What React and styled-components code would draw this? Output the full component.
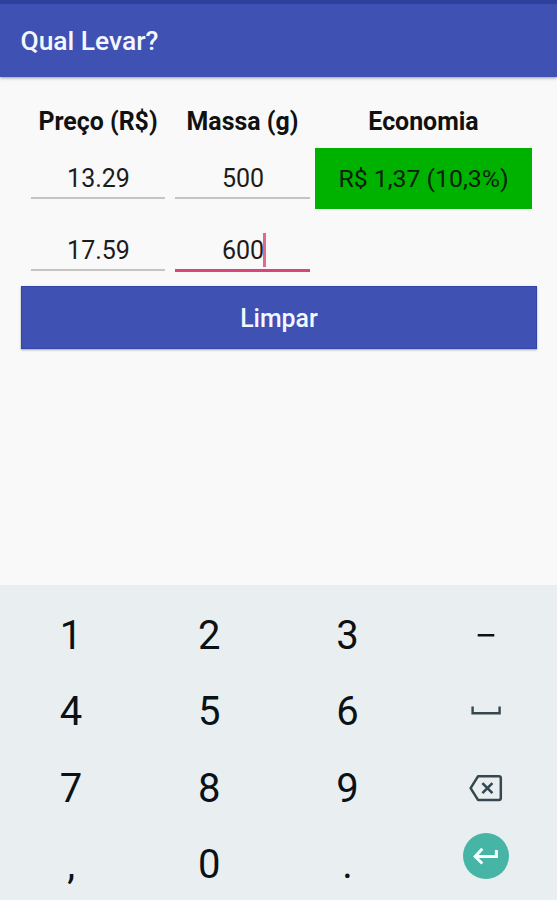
import React from 'react';
import styled, { createGlobalStyle } from 'styled-components';

const indigo = '#3f51b3';
const indigoDark = '#2f3f9c';
const pink = '#d8457a';
const green = '#00b200';
const teal = '#46b5a6';
const inkColor = '#1c1c1c';
const iconColor = '#37474f';
const robotoFont = 'Roboto, sans-serif';

const GlobalStyle = createGlobalStyle`
  body {
    margin: 0;
    background: #f9f9f9;
    font-family: ${robotoFont};
  }

  * {
    box-sizing: border-box;
  }
`;

const Screen = styled.div`
  display: flex;
  flex-direction: column;
  width: 557px;
  height: 900px;
  overflow: hidden;
`;

const Toolbar = styled.header`
  display: flex;
  align-items: center;
  flex: none;
  height: 77px;
  padding: 0 20.5px;
  border-top: 4px solid ${indigoDark};
  background: ${indigo};
  box-shadow: 0 1px 3px rgba(0, 0, 0, 0.4);
`;

const Title = styled.h1`
  margin: 0;
  color: #f4f7ff;
  font-size: 26.4px;
  font-weight: 500;
  line-height: 30px;
`;

const Content = styled.main`
  flex: 1;
  padding: 18px 20px 0 21px;
`;

const Table = styled.div`
  display: grid;
  grid-template-columns: 144px 145px 217px;
  grid-template-rows: 53px 72px 66px;
  padding-left: 5px;
`;

const Heading = styled.div`
  padding-top: 12px;
  color: #111;
  font-size: 24.9px;
  font-weight: 700;
  line-height: 30px;
  text-align: center;
`;

const Field = styled.div`
  display: flex;
  justify-content: center;
  height: ${({ $active }) => ($active ? 52 : 51)}px;
  margin: 0 5px;
  padding-top: 15px;
  border-bottom: ${({ $active }) => ($active ? `3px solid ${pink}` : '2px solid #c4c4c4')};
  color: ${inkColor};
  font-size: 25px;
  line-height: 32px;
`;

const Value = styled.span`
  position: relative;
  left: 0.5px;
`;

const Caret = styled.i`
  position: absolute;
  top: -2px;
  right: -2px;
  width: 3px;
  height: 34px;
  background: ${pink};
  opacity: 0.8;
`;

const Saving = styled.div`
  height: 61px;
  background: ${green};
  color: #0a1f0a;
  font-size: 24.8px;
  line-height: 62px;
  text-align: center;
`;

const ClearButton = styled.button`
  display: block;
  width: 100%;
  height: 63px;
  padding: 2px 0 0;
  border: 1px solid #3345a6;
  background: ${indigo};
  box-shadow: 0 1px 2px rgba(0, 0, 0, 0.35);
  color: #f4f7ff;
  font: 500 24.9px/30px ${robotoFont};
`;

const Keyboard = styled.footer`
  display: grid;
  grid-template-columns: repeat(4, 138.2px);
  grid-template-rows: repeat(4, 76.5px);
  flex: none;
  height: 315px;
  padding: 12px 0 0 2px;
  background: #e9eff0;
`;

const Key = styled.div`
  display: flex;
  align-items: center;
  justify-content: center;
  padding-top: 1px;
  color: #0b1114;
  font-size: 40px;
  line-height: 46px;
`;

const EnterKey = styled.div`
  display: flex;
  align-items: center;
  justify-content: center;
  width: 46px;
  height: 46px;
  margin-bottom: 18px;
  border-radius: 50%;
  background: ${teal};
`;

const MinusIcon = () => (
  <svg width="18" height="4" viewBox="0 0 18 4">
    <path d="M.7 1.1h16.6" stroke="#0b1114" strokeWidth="2.8" />
  </svg>
);

const SpaceIcon = () => (
  <svg width="30" height="12" viewBox="0 0 30 12">
    <path d="M1.6 .4v6.8h27V.4" fill="none" stroke={iconColor} strokeWidth="2.4" />
  </svg>
);

const BackspaceIcon = () => (
  <svg width="34" height="28" viewBox="0 0 34 28" fill="none" stroke={iconColor}>
    <path
      d="M9 1.3h20.8a2 2 0 0 1 2 2v19.6a2 2 0 0 1-2 2H9L1.6 13.1z"
      strokeWidth="2.5"
      strokeLinejoin="round"
    />
    <path d="M13.4 8.1l10 10M23.4 8.1l-10 10" strokeWidth="2.6" />
  </svg>
);

const EnterIcon = () => (
  <svg width="26" height="18" viewBox="0 0 26 18">
    <path
      d="M23.4 3v6.5H2.2M9.3 1.8L2.2 9.5l7.1 7"
      fill="none"
      stroke="#f5fffd"
      strokeWidth="3"
    />
  </svg>
);

const keys = [
  '1', '2', '3', <MinusIcon />,
  '4', '5', '6', <SpaceIcon />,
  '7', '8', '9', <BackspaceIcon />,
  ',', '0', '.', <EnterKey><EnterIcon /></EnterKey>,
];

function Input({ value, active = false }) {
  return (
    <Field $active={active}>
      <Value>
        {value}
        {active && <Caret />}
      </Value>
    </Field>
  );
}

export default function App() {
  return (
    <Screen>
      <GlobalStyle />
      <Toolbar>
        <Title>Qual Levar?</Title>
      </Toolbar>

      <Content>
        <Table>
          <Heading>Preço (R$)</Heading>
          <Heading>Massa (g)</Heading>
          <Heading>Economia</Heading>
          <Input value="13.29" />
          <Input value="500" />
          <Saving>R$ 1,37 (10,3%)</Saving>
          <Input value="17.59" />
          <Input value="600" active />
        </Table>
        <ClearButton>Limpar</ClearButton>
      </Content>

      <Keyboard>
        {keys.map((key, i) => (
          <Key key={i}>{key}</Key>
        ))}
      </Keyboard>
    </Screen>
  );
}
